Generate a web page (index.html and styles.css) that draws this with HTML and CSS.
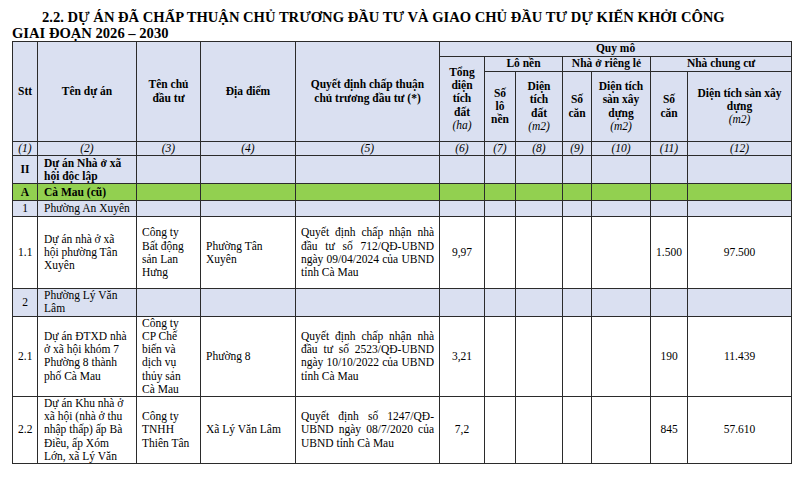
FILE: index.html
```html
<!DOCTYPE html>
<html lang="vi">
<head>
<meta charset="utf-8">
<title>Dự án nhà ở xã hội</title>
<link rel="stylesheet" href="styles.css">
</head>
<body>
<div class="page">
  <h2 class="title">2.2. DỰ ÁN ĐÃ CHẤP THUẬN CHỦ TRƯƠNG ĐẦU TƯ VÀ GIAO CHỦ ĐẦU TƯ DỰ KIẾN KHỞI CÔNG<br>GIAI ĐOẠN 2026 – 2030</h2>
  <table class="grid">
    <colgroup>
      <col class="c1"><col class="c2"><col class="c3"><col class="c4"><col class="c5"><col class="c6">
      <col class="c7"><col class="c8"><col class="c9"><col class="c10"><col class="c11"><col class="c12">
    </colgroup>
    <thead>
      <tr class="h1">
        <th rowspan="3">Stt</th>
        <th rowspan="3">Tên dự án</th>
        <th rowspan="3">Tên chủ đầu tư</th>
        <th rowspan="3">Địa điểm</th>
        <th rowspan="3">Quyết định chấp thuận chủ trương đầu tư (*)</th>
        <th colspan="7">Quy mô</th>
      </tr>
      <tr class="h2">
        <th rowspan="2">Tổng diện tích đất <i>(ha)</i></th>
        <th colspan="2">Lô nền</th>
        <th colspan="2">Nhà ở riêng lẻ</th>
        <th colspan="2">Nhà chung cư</th>
      </tr>
      <tr class="h3">
        <th>Số lô nền</th>
        <th>Diện tích đất <i>(m2)</i></th>
        <th>Số căn</th>
        <th>Diện tích sàn xây dựng <i>(m2)</i></th>
        <th>Số căn</th>
        <th>Diện tích sàn xây dựng <i>(m2)</i></th>
      </tr>
      <tr class="nums">
        <td>(1)</td><td>(2)</td><td>(3)</td><td>(4)</td><td>(5)</td><td>(6)</td>
        <td>(7)</td><td>(8)</td><td>(9)</td><td>(10)</td><td>(11)</td><td>(12)</td>
      </tr>
    </thead>
    <tbody>
      <tr class="tint r-ii">
        <td class="ctr b">II</td><td class="lft name b">Dự án Nhà ở xã hội độc lập</td>
        <td></td><td></td><td></td><td></td><td></td><td></td><td></td><td></td><td></td><td></td>
      </tr>
      <tr class="green r-a">
        <td class="ctr b">A</td><td class="lft name b">Cà Mau (cũ)</td>
        <td></td><td></td><td></td><td></td><td></td><td></td><td></td><td></td><td></td><td></td>
      </tr>
      <tr class="tint r-1">
        <td class="ctr">1</td><td class="lft name one">Phường An Xuyên</td>
        <td></td><td></td><td></td><td></td><td></td><td></td><td></td><td></td><td></td><td></td>
      </tr>
      <tr class="r-11">
        <td class="ctr">1.1</td>
        <td class="lft name">Dự án nhà ở xã hội phường Tân Xuyên</td>
        <td class="lft">Công ty Bất động sản Lan Hưng</td>
        <td class="lft">Phường Tân Xuyên</td>
        <td class="jst">Quyết định chấp nhận nhà đầu tư số 712/QĐ-UBND ngày 09/04/2024 của UBND tỉnh Cà Mau</td>
        <td class="ctr">9,97</td><td></td><td></td><td></td><td></td>
        <td class="ctr">1.500</td><td class="ctr">97.500</td>
      </tr>
      <tr class="tint r-2">
        <td class="ctr">2</td><td class="lft name">Phường Lý Văn Lâm</td>
        <td></td><td></td><td></td><td></td><td></td><td></td><td></td><td></td><td></td><td></td>
      </tr>
      <tr class="r-21">
        <td class="ctr">2.1</td>
        <td class="lft name">Dự án ĐTXD nhà ở xã hội khóm 7 Phường 8 thành phố Cà Mau</td>
        <td class="lft">Công ty CP Chế biến và dịch vụ thủy sản Cà Mau</td>
        <td class="lft">Phường 8</td>
        <td class="jst">Quyết định chấp nhận nhà đầu tư số 2523/QĐ-UBND ngày 10/10/2022 của UBND tỉnh Cà Mau</td>
        <td class="ctr">3,21</td><td></td><td></td><td></td><td></td>
        <td class="ctr">190</td><td class="ctr">11.439</td>
      </tr>
      <tr class="r-22">
        <td class="ctr">2.2</td>
        <td class="lft name top"><div class="clip">Dự án Khu nhà ở xã hội (nhà ở thu nhập thấp) ấp Bà Điều, ấp Xóm Lớn, xã Lý Văn Lâm</div></td>
        <td class="lft">Công ty TNHH Thiên Tân</td>
        <td class="lft">Xã Lý Văn Lâm</td>
        <td class="jst">Quyết định số 1247/QĐ-UBND ngày 08/7/2020 của UBND tỉnh Cà Mau</td>
        <td class="ctr">7,2</td><td></td><td></td><td></td><td></td>
        <td class="ctr">845</td><td class="ctr">57.610</td>
      </tr>
    </tbody>
  </table>
</div>
</body>
</html>
```

FILE: styles.css
```css
html, body {
  margin: 0;
  padding: 0;
  background: #ffffff;
}

.page {
  padding: 9px 0 0 12px;
  font-family: "Liberation Serif", "Times New Roman", serif;
  color: #000;
}

.title {
  margin: 0;
  font-size: 14.6px;
  line-height: 16px;
  font-weight: bold;
  text-indent: 30px;
  white-space: nowrap;
}

.grid {
  border-collapse: collapse;
  table-layout: fixed;
  width: 779px;
  font-size: 11.5px;
  line-height: 1.15;
}

.c1 { width: 25px; }
.c2 { width: 99px; }
.c3 { width: 64px; }
.c4 { width: 95px; }
.c5 { width: 144px; }
.c6 { width: 45px; }
.c7 { width: 31px; }
.c8 { width: 47px; }
.c9 { width: 29px; }
.c10 { width: 59px; }
.c11 { width: 37px; }
.c12 { width: 104px; }

.grid th,
.grid td {
  border: 1px solid #2b2b2b;
  padding: 0 5px;
  vertical-align: middle;
  overflow: hidden;
}

.grid thead th,
.grid thead td {
  background: #dae0f1;
  text-align: center;
}

.grid thead th {
  font-weight: bold;
}

.grid thead th i {
  font-weight: normal;
  display: block;
}

.h1 { height: 15px; }
.h2 { height: 15px; }
.h3 { height: 70px; }

.nums { height: 14px; }
.nums td { font-style: italic; }

.tint td { background: #dae0f1; }
.green td { background: #92d050; }

.r-ii { height: 28px; }
.r-a { height: 17px; }
.r-1 { height: 16px; }
.r-11 { height: 72px; }
.r-2 { height: 27px; }
.r-21 { height: 80px; }
.r-22 { height: 67px; }

.ctr { text-align: center; }
.lft { text-align: left; }
.jst { text-align: justify; }
.b { font-weight: bold; }
.top { vertical-align: top; }

.grid td.name {
  padding: 0 6px 0 6px;
}

.grid td.one {
  white-space: nowrap;
}

.clip {
  height: 66px;
  overflow: hidden;
}
```
